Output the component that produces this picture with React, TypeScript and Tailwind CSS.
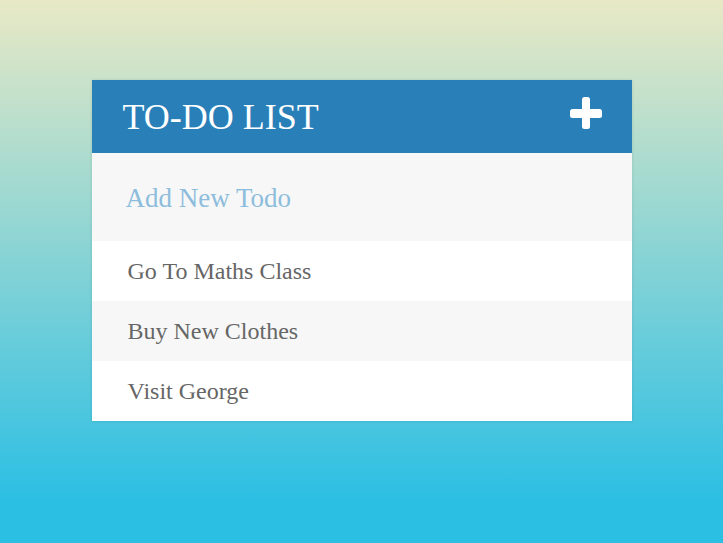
import React from "react";

export default function App() {
  const todos = ["Go To Maths Class", "Buy New Clothes", "Visit George"];
  return (
    <div
      className="min-h-screen w-full pt-[80px] bg-[linear-gradient(to_bottom,#e8e9c5_0%,#2cbfe4_92%,#2cbfe4_100%)]"
      style={{ fontFamily: '"Liberation Serif", "Times New Roman", serif' }}
    >
      <div className="mx-auto w-[540px] bg-white shadow-[0_0_3px_rgba(0,0,0,0.12)]">
        <div className="flex h-[73px] items-center justify-between bg-[#2980b9] pl-[31px] pr-[30px]">
          <h1 className="text-[36px] leading-none font-normal text-white">TO-DO LIST</h1>
          <svg width="32" height="32" viewBox="0 0 32 32" aria-hidden="true" className="mb-[7px]">
            <rect x="12" y="0" width="8" height="32" rx="2.5" fill="#ffffff" />
            <rect x="0" y="12" width="32" height="9" rx="2.5" fill="#ffffff" />
          </svg>
        </div>
        <div className="flex h-[88px] items-center bg-[#f7f7f7]">
          <input
            type="text"
            placeholder="Add New Todo"
            className="w-full bg-transparent pl-[34px] pt-[2px] text-[27px] text-[#2980b9] outline-none placeholder:text-[#8dbddc]"
            style={{ fontFamily: '"Liberation Serif", "Times New Roman", serif' }}
          />
        </div>
        <ul>
          {todos.map((t, i) => (
            <li
              key={t}
              className={`flex h-[60px] items-center pl-[36px] text-[24px] text-[#666666] ${
                i % 2 === 1 ? "bg-[#f7f7f7]" : "bg-white"
              }`}
            >
              {t}
            </li>
          ))}
        </ul>
      </div>
    </div>
  );
}
